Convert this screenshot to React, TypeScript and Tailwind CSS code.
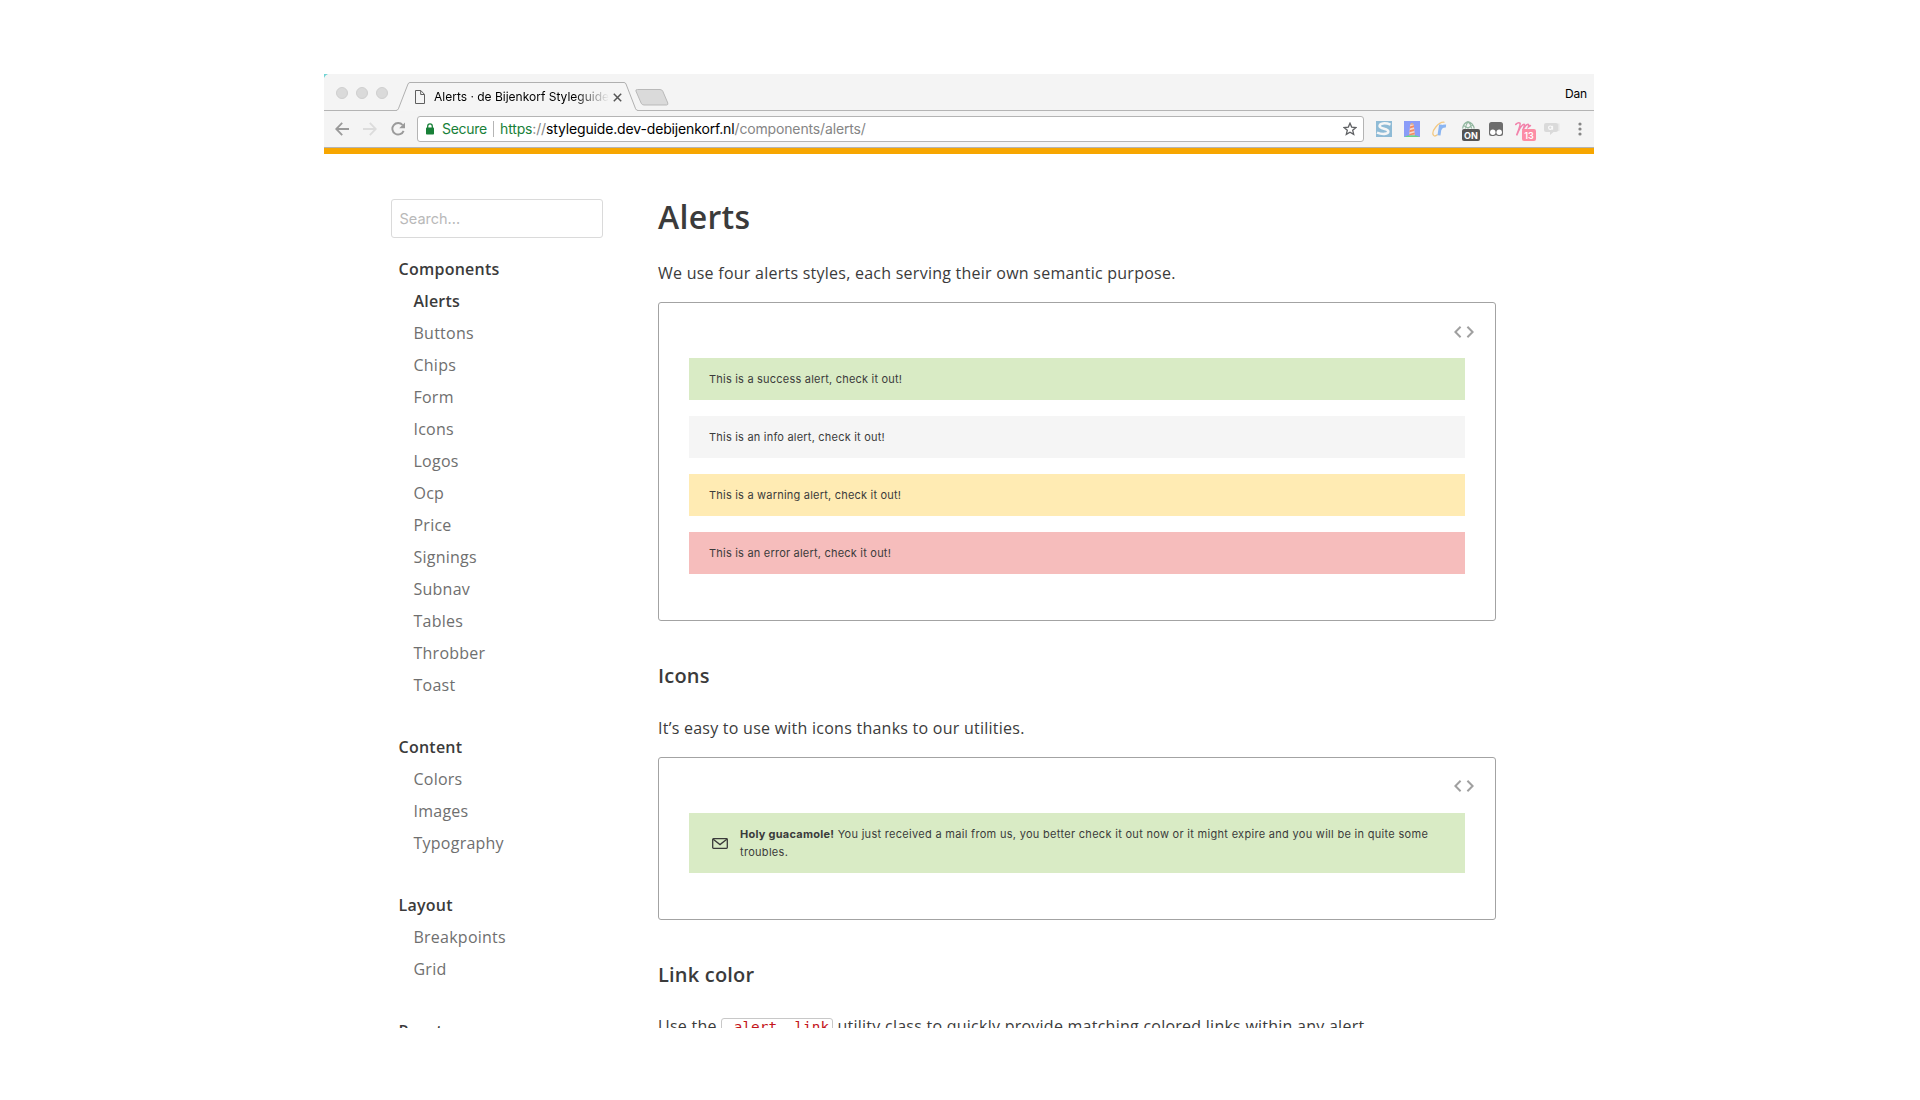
import type { ReactNode } from "react";

const navGroups: { title: string; items: string[] }[] = [
  {
    title: "Components",
    items: ["Alerts", "Buttons", "Chips", "Form", "Icons", "Logos", "Ocp", "Price", "Signings", "Subnav", "Tables", "Throbber", "Toast"],
  },
  { title: "Content", items: ["Colors", "Images", "Typography"] },
  { title: "Layout", items: ["Breakpoints", "Grid"] },
  { title: "React", items: [] },
];

const alerts = [
  { color: "bg-[#d9ebc5]", text: "This is a success alert, check it out!" },
  { color: "bg-[#f5f5f5]", text: "This is an info alert, check it out!" },
  { color: "bg-[#ffebb3]", text: "This is a warning alert, check it out!" },
  { color: "bg-[#f6bdbc]", text: "This is an error alert, check it out!" },
];

function TabStrip() {
  return (
    <div className="flex h-[37px] items-end border-b border-[#b4b4b4]">
      <div className="flex w-[72px] shrink-0 gap-2 self-start pt-[13px] pl-3">
        {[0, 1, 2].map((i) => (
          <span key={i} className="size-3 shrink-0 rounded-full border border-[#cfcfcf] bg-[#dadada]" />
        ))}
      </div>
      <div className="relative -mb-px h-[29px] w-[242px] shrink-0">
        <svg className="absolute inset-0" width="242" height="29" viewBox="0 0 242 29" fill="none">
          <path d="M0 28.5 Q1.6 28.5 2.4 26.8 L12 2 Q12.6 .5 14 .5 H228 Q229.4 .5 230 2 L239.6 26.8 Q240.4 28.5 242 28.5 V29 H0Z" fill="#f5f5f5" />
          <path d="M0 28.5 Q1.6 28.5 2.4 26.8 L12 2 Q12.6 .5 14 .5 H228 Q229.4 .5 230 2 L239.6 26.8 Q240.4 28.5 242 28.5" stroke="#b0b0b0" />
        </svg>
        <div className="relative flex h-[29px] items-center pl-[19px]">
          <svg width="10" height="14" viewBox="0 0 10 14" fill="none" stroke="#5f5f5f" className="mt-px shrink-0">
            <path d="M.5 .5 H5.8 L9.5 4.4 V13.5 H.5Z M5.7 .8 V4.5 H9.3" />
          </svg>
          <span className="ml-[9px] w-[175px] overflow-hidden bg-linear-to-r from-black from-80% to-transparent bg-clip-text font-[Inter,sans-serif] text-[12px] leading-[18px] whitespace-nowrap text-transparent">
            Alerts · de Bijenkorf Styleguide
          </span>
          <svg width="9" height="9" viewBox="0 0 9 9" stroke="#555" strokeWidth="1.5" className="mt-px ml-1 shrink-0">
            <path d="M.8 .8 L8.2 8.2 M8.2 .8 L.8 8.2" />
          </svg>
        </div>
      </div>
      <svg width="34" height="17" viewBox="0 0 34 17" className="mb-[4px] -ml-[3px] shrink-0">
        <path d="M2.5 .5 H25 Q27 .5 27.8 2.3 L32.8 14 Q33.3 16 31.5 16 H9 Q7 16 6.2 14.2 L.9 2 Q.5 .5 2.5 .5Z" fill="#dadada" stroke="#b9b9b9" />
      </svg>
      <span className="ml-auto self-start pt-[11px] pr-[7px] font-[Inter,sans-serif] text-[12px] leading-[18px] tracking-[-0.2px] text-black">Dan</span>
    </div>
  );
}

function Extensions() {
  return (
    <div className="flex h-full items-center">
      <svg width="16" height="16" viewBox="0 0 16 16" className="ml-3">
        <rect width="16" height="16" fill="#8fbbd6" />
        <path d="M14.5 3.6 C9 1.4 3.6 2.2 3.6 5 C3.6 8.3 12.3 7.4 12.3 10.5 C12.3 13.4 6 13.6 1 11.6" fill="none" stroke="#f6f6f6" strokeWidth="2.6" />
      </svg>
      <svg width="16" height="16" viewBox="0 0 16 16" className="ml-3">
        <rect width="16" height="16" fill="#8a9cf8" />
        <path d="M0 16 Q8 12 16 16Z" fill="#69d28b" />
        <path d="M6.2 3.5 H9.8 L10.8 14.3 H5.2Z" fill="#f7d9cd" />
        <path d="M6 5.5 L10 4.3 V6.3 L5.8 7.6Z M5.7 9.2 L10.3 7.9 V9.9 L5.5 11.2Z M5.3 13 L10.6 11.4 L10.8 13.6 L5.2 14.3Z" fill="#f28a62" />
        <path d="M6 3.6 Q8 .2 10 3.6Z" fill="#f0b070" />
      </svg>
      <svg width="16" height="16" viewBox="0 0 16 16" className="ml-3" fill="none">
        <path d="M12.5 1.3 C7 .3 -1.5 10.5 1.6 14.4 C2.5 15.4 4.4 14.6 5.6 13.6" stroke="#f3c983" strokeWidth="1.3" />
        <path d="M8.6 3.6 L7 14.4 M8 8.4 Q9.4 4.6 14 5" stroke="#8ab5f2" strokeWidth="3" />
      </svg>
      <div className="relative ml-[14px] h-[24px] w-[18px]">
        <svg width="18" height="24" viewBox="0 0 18 24" fill="none" stroke="#93b8a1" strokeWidth="1.2">
          <path d="M.6 11.5 Q1.5 6 6 4.6 Q11 6 12.3 11.5 M3.4 11.5 Q4 7 6 4.8 Q9 7 9.7 11.5 M1.5 8.5 L6 11 L11 8" />
        </svg>
        <span className="absolute top-[12px] left-0 flex h-[12px] w-[18px] items-center justify-center rounded-[2px] bg-[#555] font-[Inter,sans-serif] text-[9px] leading-none font-bold text-white">ON</span>
      </div>
      <svg width="14" height="14" viewBox="0 0 14 14" className="ml-[9px]">
        <rect width="14" height="14" rx="2.5" fill="#6d6d6d" />
        <circle cx="3.8" cy="10.3" r="2.7" fill="#fff" />
        <circle cx="10.2" cy="10.3" r="2.7" fill="#fff" />
        <path d="M5 14 Q7 12.3 9 14Z" fill="#f5f5f5" />
      </svg>
      <div className="relative ml-[12px] h-[24px] w-[21px]">
        <svg width="21" height="24" viewBox="0 0 21 24" fill="none" stroke="#f283ab" strokeWidth="1.6" strokeLinecap="round">
          <path d="M.8 7.4 Q3.4 4.9 5 6.2 Q5.8 7.6 1.6 18.4 Q6.4 7 9 7.2 Q10.4 7.6 7.6 13.4 Q11 6.9 13.2 7.4 Q14.2 8.1 13.4 10 L15.4 8.6" />
        </svg>
        <span className="absolute top-[12px] left-[7px] flex h-[12px] w-[14px] items-center justify-center rounded-[2px] bg-[#fc8da5] font-[Inter,sans-serif] text-[9px] leading-none font-semibold text-white">13</span>
      </div>
      <svg width="16" height="14" viewBox="0 0 16 14" className="ml-[8px]">
        <path d="M13 1.5 H15.5 V9 H13Z" fill="#e6e6e6" />
        <path d="M2 1 H12 Q14 1 14 3 V8 Q14 10 12 10 H9.5 L6 13 V10 H2 Q0 10 0 8 V3 Q0 1 2 1Z" fill="#dadada" />
        <circle cx="6.3" cy="5.7" r="1.7" fill="none" stroke="#fafafa" strokeWidth="1.1" />
        <path d="M8.6 3.8 V7.7" stroke="#fafafa" strokeWidth="1" />
      </svg>
      <svg width="4" height="14" viewBox="0 0 4 14" className="mr-[12px] ml-[18px]" fill="#868686">
        <circle cx="2" cy="2" r="1.6" />
        <circle cx="2" cy="7" r="1.6" />
        <circle cx="2" cy="12" r="1.6" />
      </svg>
    </div>
  );
}

function Toolbar() {
  return (
    <div className="flex h-[37px] items-center border-b border-[#b4b4b4] pl-[11px]">
      <svg width="14" height="14" viewBox="0 0 14 14" fill="none" stroke="#9a9a9a" strokeWidth="1.8" className="shrink-0">
        <path d="M14 7 H1.5 M7.2 .9 L1.2 7 L7.2 13.1" />
      </svg>
      <svg width="14" height="14" viewBox="0 0 14 14" fill="none" stroke="#dcdcdc" strokeWidth="1.8" className="ml-[14px] shrink-0">
        <path d="M0 7 H12.5 M6.8 .9 L12.8 7 L6.8 13.1" />
      </svg>
      <svg width="15" height="14" viewBox="0 0 15 14" fill="none" className="ml-[14px] shrink-0">
        <path d="M11.6 3 A5.8 5.8 0 1 0 12.6 8.8" stroke="#9a9a9a" strokeWidth="1.9" />
        <path d="M14 .4 V6.2 H8.2Z" fill="#9a9a9a" />
      </svg>
      <div className="ml-[11px] flex h-[26px] flex-1 items-center rounded-[3px] border border-[#b4b4b4] bg-white pr-[6px] pl-[8px]">
        <svg width="8" height="12" viewBox="0 0 8 12" className="shrink-0">
          <path d="M1.7 5.5 V3.2 A2.3 2.3 0 0 1 6.3 3.2 V5.5" fill="none" stroke="#188038" strokeWidth="1.3" />
          <rect y="4.5" width="8" height="7" rx=".8" fill="#188038" />
        </svg>
        <span className="ml-[8px] w-[51px] font-[Inter,sans-serif] text-[14px] leading-[20px] tracking-[-0.3px] text-[#188038]">Secure</span>
        <span className="h-4 w-px bg-[#b5b5b5]" />
        <span className="ml-[6px] font-[Inter,sans-serif] text-[14px] leading-[20px] tracking-[-0.15px] whitespace-nowrap text-[#858585]">
          <span className="text-[#188038]">https</span>://<span className="text-black">styleguide.dev-debijenkorf.nl</span>/components/alerts/
        </span>
        <svg width="14" height="14" viewBox="0 0 14 14" fill="none" stroke="#5f6164" strokeWidth="1.3" className="ml-auto shrink-0">
          <path d="M7 1.2 L8.7 5.1 L12.9 5.5 L9.7 8.3 L10.7 12.4 L7 10.2 L3.3 12.4 L4.3 8.3 L1.1 5.5 L5.3 5.1Z" />
        </svg>
      </div>
      <Extensions />
    </div>
  );
}

function Sidebar() {
  return (
    <aside className="w-[212px] shrink-0">
      <input
        className="h-[39px] w-full rounded-[3px] border border-[#dadada] bg-white px-[7.5px] font-[Inter,sans-serif] text-[14.5px] outline-none placeholder:text-[#b9b9b9]"
        placeholder="Search..."
      />
      <nav className="flex flex-col gap-[30px] pt-[15px] pl-[7.5px]">
        {navGroups.map((group) => (
          <div key={group.title}>
            <h3 className="text-base leading-8 font-semibold tracking-[0.25px]">{group.title}</h3>
            <ul className="pl-[15px]">
              {group.items.map((item) => (
                <li
                  key={item}
                  className={
                    item === "Alerts"
                      ? "leading-8 font-semibold tracking-[0.2px]"
                      : "leading-8 tracking-[0.24px] text-[#6f6f6f]"
                  }
                >
                  {item}
                </li>
              ))}
            </ul>
          </div>
        ))}
      </nav>
    </aside>
  );
}

function Example({ children, className, iconClassName }: { children: ReactNode; className: string; iconClassName: string }) {
  return (
    <div className={`flex flex-col rounded-[3px] border border-[#a3a3a3] px-[30px] ${className}`}>
      <div className="flex h-[55px] shrink-0 justify-end">
        <svg width="20" height="12" viewBox="0 0 20 12" fill="none" stroke="#a0a0a0" strokeWidth="2" className={`-mr-[9px] ${iconClassName}`}>
          <path d="M6.6 .8 L1.4 6 L6.6 11.2 M13.4 .8 L18.6 6 L13.4 11.2" />
        </svg>
      </div>
      {children}
    </div>
  );
}

export default function App() {
  return (
    <div className="h-[1100px] overflow-hidden bg-white pt-[74px] pl-[324px]">
      <div className="relative flex h-[954px] w-[1270px] flex-col overflow-hidden bg-white font-['Open_Sans',sans-serif] text-[#3b3b3b]">
        <div className="shrink-0 bg-[#f4f4f4]">
          <TabStrip />
          <Toolbar />
          <div className="h-[6px] bg-[#f7a600]" />
        </div>
        <svg width="4" height="4" viewBox="0 0 4 4" className="absolute top-0 left-0">
          <path d="M0 0 H4 Q1 1 0 4Z" fill="#6fd3d3" />
        </svg>
        <div className="flex shrink-0 pt-[43px] pl-[67px]">
          <div className="flex pt-[2px]">
            <Sidebar />
          </div>
          <main className="ml-[55px] w-[838px]">
            <h1 className="text-[32px] leading-10 font-semibold tracking-[0.3px]">Alerts</h1>
            <p className="mt-6 text-base leading-6 tracking-[0.25px]">We use four alerts styles, each serving their own semantic purpose.</p>
            <Example className="mt-[17px] h-[319px]" iconClassName="mt-[23px]">
              <div className="flex flex-col gap-4">
                {alerts.map((a) => (
                  <div key={a.text} className={`px-5 py-3 font-[Inter,sans-serif] text-[11px] leading-[18px] tracking-[0.21px] ${a.color}`}>
                    {a.text}
                  </div>
                ))}
              </div>
            </Example>
            <h2 className="mt-10 text-xl leading-[30px] font-semibold tracking-[0.2px]">Icons</h2>
            <p className="mt-[25px] text-base leading-6 tracking-[0.25px]">It’s easy to use with icons thanks to our utilities.</p>
            <Example className="mt-[17px] h-[163px]" iconClassName="mt-[22px]">
              <div className="flex h-[60px] items-center bg-[#d9ebc5] pl-[23px]">
                <svg width="16" height="11" viewBox="0 0 16 11" fill="none" stroke="#3b3b3b" strokeWidth="1.3" className="shrink-0">
                  <rect x=".7" y=".7" width="14.6" height="9.6" rx=".8" />
                  <path d="M1.2 1.2 L8 6.6 L14.8 1.2" />
                </svg>
                <p className="ml-3 w-[695px] font-[Inter,sans-serif] text-[11px] leading-[18px] tracking-[0.3px]">
                  <strong className="font-bold tracking-[0.25px]">Holy guacamole!</strong> You just received a mail from us, you better check it out now or it might expire and you will be in quite some troubles.
                </p>
              </div>
            </Example>
            <h2 className="mt-10 text-xl leading-[30px] font-semibold tracking-[0.2px]">Link color</h2>
            <p className="mt-6 text-base leading-6 tracking-[0.25px] whitespace-nowrap">
              Use the{" "}
              <code className="rounded-[3px] border border-[#c8c8c8] px-[3px] font-['DejaVu_Sans_Mono',monospace] text-[14.4px] tracking-normal text-[#c4161c]">
                .alert__link
              </code>{" "}
              utility class to quickly provide matching colored links within any alert
            </p>
          </main>
        </div>
      </div>
    </div>
  );
}
